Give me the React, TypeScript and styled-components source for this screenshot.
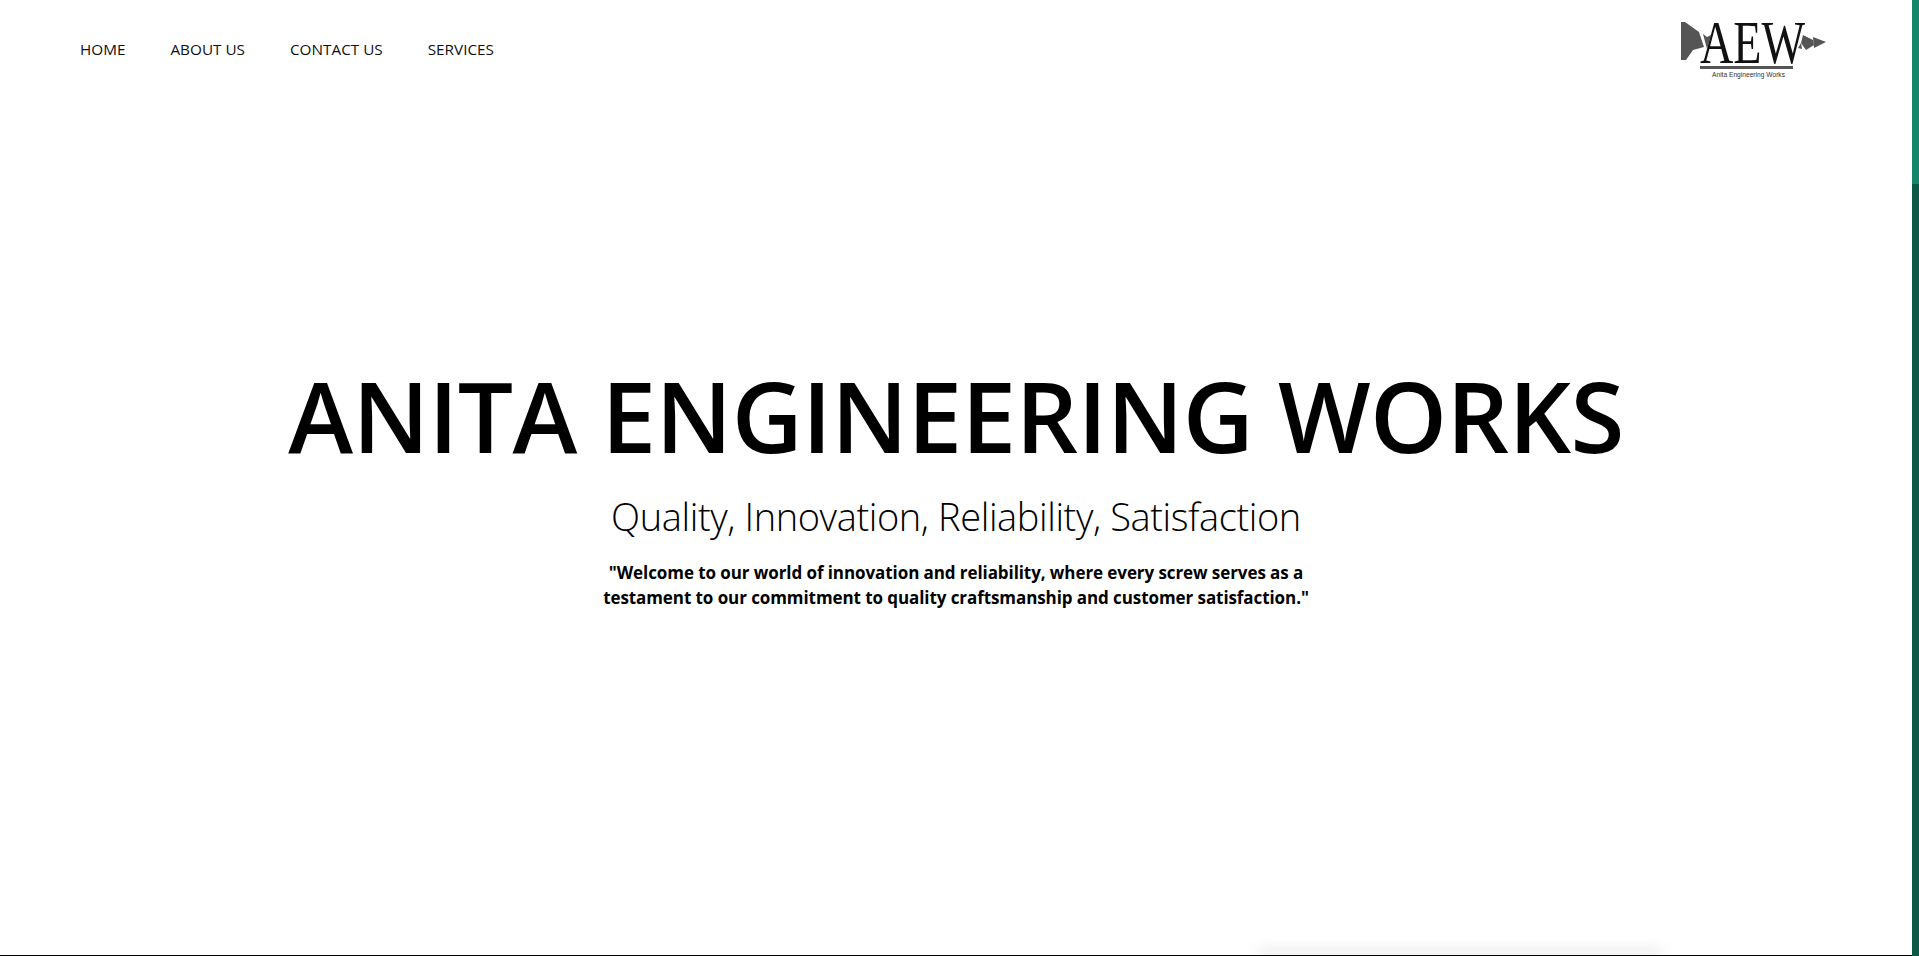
import React from 'react'
import styled, { createGlobalStyle } from 'styled-components'

const GlobalStyle = createGlobalStyle`
  html, body {
    margin: 0;
    padding: 0;
    height: 100%;
    overflow: hidden;
    background: #fff;
    font-family: 'Open Sans', 'Noto Sans', sans-serif;
    color: #000;
  }
`

const Shell = styled.div`
  display: flex;
  width: 1919px;
  height: 956px;
`

const Page = styled.div`
  flex: 1;
  display: flex;
  flex-direction: column;
  min-width: 0;
  overflow: hidden;
  border-bottom: 1px solid #000;
`

const Scrollbar = styled.div`
  width: 7px;
  background: #0c5a45;
`

const ScrollThumb = styled.div`
  height: 184px;
  background: #16866a;
`

const Header = styled.header`
  display: flex;
  justify-content: space-between;
  align-items: flex-start;
  height: 100px;
  padding: 4px 82px 0 80px;
  box-sizing: border-box;
`

const Nav = styled.nav`
  display: flex;
  gap: 45px;
  padding-top: 35px;
`

const NavLink = styled.a`
  font-size: 15.3px;
  line-height: 21px;
  color: #111;
  text-decoration: none;
`

const Hero = styled.main`
  display: flex;
  flex-direction: column;
  align-items: center;
  padding-top: 250px;
  flex: 1;
`

const Title = styled.h1`
  margin: 0;
  font-size: 98px;
  font-weight: 600;
  line-height: 130px;
  letter-spacing: -0.65px;
  color: #000;
  white-space: nowrap;
`

const Subtitle = styled.h2`
  margin: 9px 0 0;
  font-size: 38px;
  font-weight: 300;
  line-height: 54px;
  letter-spacing: -0.4px;
  white-space: nowrap;
`

const Quote = styled.p`
  margin: 18px 0 0;
  width: 720px;
  font-size: 17px;
  font-weight: 700;
  line-height: 24.5px;
  letter-spacing: -0.08px;
  text-align: center;
`

const BottomFade = styled.div`
  height: 5px;
  margin: 0 250px 0 1258px;
  background: rgba(0, 0, 0, 0.14);
  filter: blur(7px);
`

function Logo() {
  return (
    <svg width="150" height="81" viewBox="0 -6 150 81">
      <path d="M1 12 L5 12 L19 22 L24 37 L13 40 L6 50 L1 50 Z" fill="#555" />
      <path d="M23 24 L27 27 L31 25 L27 39 Z" fill="#555" />
      <path d="M123 25 L133 30 L134 35 L126 40 L121 33 Z" fill="#555" />
      <path d="M133 27 L146 32 L134 38 Z" fill="#555" />
      <path d="M121 33 L122 39 L118 38 Z" fill="#555" />
      <text x="20" y="53" fontFamily="'Liberation Serif', serif" fontSize="62" fill="#111" textLength="105" lengthAdjust="spacingAndGlyphs">
        AEW
      </text>
      <rect x="20" y="56" width="93" height="3" fill="#555" />
      <text x="32" y="67" fontFamily="'Liberation Sans', sans-serif" fontSize="6.5" fill="#333" textLength="73" lengthAdjust="spacingAndGlyphs">
        Anita Engineering Works
      </text>
    </svg>
  )
}

export default function App() {
  return (
    <Shell>
      <GlobalStyle />
      <Page>
        <Header>
          <Nav>
            <NavLink href="#">HOME</NavLink>
            <NavLink href="#">ABOUT US</NavLink>
            <NavLink href="#">CONTACT US</NavLink>
            <NavLink href="#">SERVICES</NavLink>
          </Nav>
          <Logo />
        </Header>
        <Hero>
          <Title>ANITA ENGINEERING WORKS</Title>
          <Subtitle>Quality, Innovation, Reliability, Satisfaction</Subtitle>
          <Quote>
            "Welcome to our world of innovation and reliability, where every screw serves as a testament to our commitment to quality craftsmanship and customer satisfaction."
          </Quote>
        </Hero>
        <BottomFade />
      </Page>
      <Scrollbar>
        <ScrollThumb />
      </Scrollbar>
    </Shell>
  )
}
